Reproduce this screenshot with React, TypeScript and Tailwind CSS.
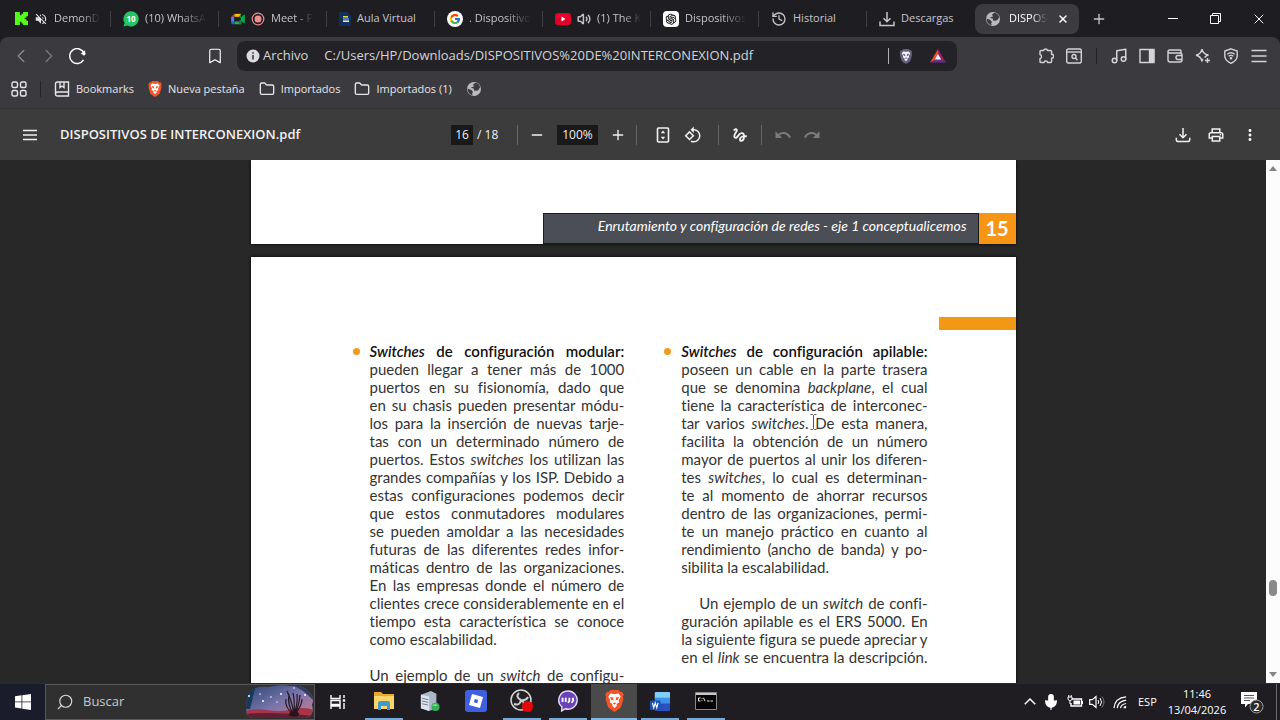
import type { ReactNode } from "react";
import {
  Bookmark, ChevronLeft, ChevronRight, Folder, History, Mic, Minus, Music, Plus, Search, Volume2, X,
} from "lucide-react";
import { FcGoogle } from "react-icons/fc";
import { AiOutlineOpenAI } from "react-icons/ai";
import { MdGesture, MdMoreVert, MdOutlinePrint, MdRedo, MdRotate90DegreesCcw, MdUndo, MdVolumeOff } from "react-icons/md";

const FADE = "[mask-image:linear-gradient(to_right,black_60%,transparent)]";

function Svg({ children, className = "size-4" }: { children: ReactNode; className?: string }) {
  return (
    <svg viewBox="0 0 16 16" className={`shrink-0 ${className}`} fill="none" stroke="currentColor" strokeWidth="1.4">
      {children}
    </svg>
  );
}

function Globe() {
  return (
    <svg viewBox="0 0 16 16" className="size-4 shrink-0">
      <circle cx="8" cy="8" r="7" fill="#b9babd" />
      <path d="M9.5 1.700 7 3.600 8 5.400 4.500 6.800 7.600 7.600 8.300 9.800 12 9.400 14.200 6.300A6.300 6.300 0 0 0 9.500 1.700Z" fill="#3c3c40" />
      <path d="M1.600 7.500 5.400 9.100 7 10.900 6 12.500 6.800 14.400A6.400 6.400 0 0 1 1.600 7.500Z" fill="#3c3c40" />
    </svg>
  );
}

function DownloadTray({ round = false }: { round?: boolean }) {
  return (
    <svg viewBox="0 0 16 16" className="size-4 shrink-0" fill="none" stroke="currentColor" strokeWidth="1.5">
      <path d="M8 1v9.500M4.500 7.200 8 10.700l3.500-3.500" />
      <path d={round ? "M1.300 10.800v2.200q0 1.500 1.500 1.500h10.400q1.500 0 1.500-1.500v-2.200" : "M1 10.500v4h14v-4"} />
    </svg>
  );
}

function BraveLion({ className, shield = "#f1562b", face = "#fff" }: { className: string; shield?: string; face?: string }) {
  return (
    <svg viewBox="0 0 20 24" className={className}>
      <path d="M5.5 0h9l2 2.300 1.800-.3 1.700 3-.8 2.500.6 2-2.600 8.800Q16.500 20 10 24 3.500 20 2.800 18.300L.2 9.500l.6-2L0 5l1.700-3 1.800.3Z" fill={shield} />
      <path d="m10 4.500 4.500-.7 2.300 3.500-2.300 4 .7 2-3 2 .3 2L10 19.500l-2.500-2.200.3-2-3-2 .7-2-2.300-4 2.300-3.500Z" fill={face} />
      <path d="m5 7.500 3.500.8.3 3.200-2.600-1.200ZM15 7.500l-3.500.8-.3 3.200 2.600-1.200ZM8 14.500l2-.9 2 .9-2 1.300Z" fill={shield} />
    </svg>
  );
}

function Kick() {
  return (
    <svg viewBox="0 0 12 12" className="size-[13px] shrink-0">
      <path d="M0 0h4.500v3H6V1.500h1.500V0H12v4h-1.500v1.300H9v1.400h1.500V8H12v4H7.500v-1.500H6V9H4.500v3H0Z" fill="#53fc18" />
    </svg>
  );
}

function WhatsApp() {
  return (
    <span className="relative flex size-4 shrink-0 items-center justify-center text-[#25c466]">
      <svg viewBox="0 0 16 16" className="size-4">
        <path d="M8.200.3a7.600 7.600 0 1 1-3.900 14.200L.5 15.600l1.100-3.700A7.600 7.600 0 0 1 8.200.3Z" fill="currentColor" />
      </svg>
      <b className="absolute text-[8px] leading-4 text-white">10</b>
    </span>
  );
}

function Meet() {
  return (
    <svg viewBox="0 0 16 14" className="h-3 w-[14px] shrink-0">
      <path d="M0 4.500 4 1v3.500Z" fill="#ea4335" />
      <path d="M0 4.500h3.500v6H0Z" fill="#4285f4" />
      <path d="M4 1h7.500v3.500H4Z" fill="#fbbc04" />
      <path d="M0 10h4v3H1.200Q0 13 0 11.800Z" fill="#1967d2" />
      <path d="M4 9.800h5l3-2.500V13H4Z" fill="#34a853" />
      <path d="M11.500 1v12H9V9.500L12 7 9 4.500Z" fill="#188038" />
      <path d="m11.500 5 3.500-3q1-.6 1 .5v9q0 1-1 .5l-3.500-3Z" fill="#00ac47" />
    </svg>
  );
}

function Recording() {
  return (
    <svg viewBox="0 0 14 14" className="size-[14px] shrink-0">
      <circle cx="7" cy="7" r="5.8" fill="none" stroke="#e58a90" strokeWidth="1.2" />
      <circle cx="7" cy="7" r="3.5" fill="#f28b8f" />
    </svg>
  );
}

function AulaLogo() {
  return (
    <svg viewBox="0 0 12 14" className="h-[14px] w-3 shrink-0">
      <path d="M0 0h8l4 4v10H0Z" fill="#12305a" />
      <path d="M4 4h5v1.500H4Z" fill="#f0d843" />
      <path d="M4 6.200h6v1.500H4Z" fill="#4aa3d8" />
      <path d="M4 8.400h6V10H4Z" fill="#e8ecc0" />
    </svg>
  );
}

function YouTube() {
  return (
    <svg viewBox="0 0 16 12" className="h-3 w-4 shrink-0">
      <rect width="16" height="12" rx="3" fill="#e3002b" />
      <path d="m6.5 3.600 4 2.400-4 2.400Z" fill="#fff" />
    </svg>
  );
}

interface Tab {
  title: string;
  icon: ReactNode;
  extra?: ReactNode;
  fade?: boolean;
}

const TABS: Tab[] = [
  { title: "DemonD", icon: <Kick />, extra: <MdVolumeOff className="size-[14px] shrink-0 text-[#e4e4e8]" />, fade: true },
  { title: "(10) WhatsA", icon: <WhatsApp />, fade: true },
  { title: "Meet - P", icon: <Meet />, extra: <Recording />, fade: true },
  { title: "Aula Virtual", icon: <AulaLogo /> },
  {
    title: ". Dispositivo",
    icon: <span className="flex size-4 shrink-0 items-center justify-center rounded-full bg-white"><FcGoogle className="size-3" /></span>,
    fade: true,
  },
  { title: "(1) The K", icon: <YouTube />, extra: <Volume2 className="size-[14px] shrink-0" strokeWidth={2.5} />, fade: true },
  {
    title: "Dispositivos",
    icon: <span className="flex size-4 shrink-0 items-center justify-center rounded bg-white text-black"><AiOutlineOpenAI className="size-[14px]" /></span>,
    fade: true,
  },
  { title: "Historial", icon: <History className="size-4 shrink-0" /> },
  { title: "Descargas", icon: <DownloadTray /> },
];

function TabStrip() {
  return (
    <div className="flex h-[37px] shrink-0 items-center pl-[2px] text-[11px] text-[#c5c5c9]">
      {TABS.map((tab, i) => (
        <button key={tab.title} className="flex h-7 w-[108px] min-w-0 items-center">
          <span className={`h-4 w-px shrink-0 ${i > 0 ? "bg-[#3f3f44]" : ""}`} />
          <span className="ml-3 flex items-center gap-[6px]">
            {tab.icon}
            {tab.extra}
            <span className={`whitespace-nowrap ${tab.fade ? FADE : ""}`}>{tab.title}</span>
          </span>
        </button>
      ))}
      <div className="ml-px flex h-[30px] w-[104px] items-center rounded-lg bg-[#3c3c40] px-[10px] text-white">
        <Globe />
        <button className={`ml-2 whitespace-nowrap ${FADE}`}>DISPOS</button>
        <button aria-label="Cerrar pestaña" className="ml-auto"><X className="size-3" strokeWidth={3} /></button>
      </div>
      <button aria-label="Nueva pestaña" className="ml-3"><Plus className="size-4" strokeWidth={2} /></button>
      <div className="ml-auto flex h-full text-white">
        <button aria-label="Minimizar" className="flex w-[43px] items-center justify-center"><span className="h-px w-[10px] bg-white" /></button>
        <button aria-label="Restaurar" className="flex w-[43px] items-center justify-center">
          <svg viewBox="0 0 11 11" className="size-[11px]" fill="none" stroke="currentColor">
            <path d="M.5 2.500h8v8h-8ZM2.500 2.500v-2h8v8h-2" />
          </svg>
        </button>
        <button aria-label="Cerrar" className="flex w-[43px] items-center justify-center"><X className="size-4" strokeWidth={1.5} /></button>
      </div>
    </div>
  );
}

const TOOLS: { label: string; art: ReactNode }[] = [
  { label: "Música", art: <Music className="size-[18px]" strokeWidth={2} /> },
  { label: "Panel lateral", art: <Svg><path d="M1 1.500h14v13H1Z" /><path d="M10.500 2h4v12h-4Z" fill="currentColor" /></Svg> },
  {
    label: "Cartera",
    art: <Svg><path d="M14 5V3q0-1-1-1H3Q1 2 1 3.500V12q0 2 2 2h10q2 0 2-2V7q0-2-2-2H3Q1 5 1 3.500" /><path d="M15 7.500h-4q-2 0-2 2t2 2h4" /></Svg>,
  },
  {
    label: "Leo",
    art: <Svg><path d="M7 1.200Q8 6.200 13.500 7 11 7.500 9.600 9.500M7 1.200Q6 6.200 1 7.200q5 1 6 6.300.3-1.800 1-2.600" /><path d="M12.5 10v5M10 12.500h5" /></Svg>,
  },
  {
    label: "VPN",
    art: <Svg><path d="M8 .8 14.200 3v5q0 4.500-6.200 7.400Q1.800 12.500 1.800 8V3Z" /><path d="M4.300 6.200q3.700-2.800 7.400 0M5.600 8.300q2.400-1.800 4.800 0" /><circle cx="8" cy="10.2" r=".6" fill="currentColor" /></Svg>,
  },
  { label: "Menú", art: <Svg><path d="M.5 2.500h15M.5 8h15M.5 13.500h15" /></Svg> },
];

function NavRow() {
  return (
    <div className="flex h-[38px] items-center pl-[7px] pr-[7px] text-[#d4d4d8]">
      <button aria-label="Atrás" className="flex w-7 justify-center text-[#8b8b90]"><ChevronLeft className="size-[22px]" strokeWidth={1.5} /></button>
      <button aria-label="Adelante" className="flex w-7 justify-center text-[#77777c]"><ChevronRight className="size-[22px]" strokeWidth={1.5} /></button>
      <button aria-label="Recargar" className="flex w-7 justify-center">
        <Svg className="size-[17px] text-white">
          <path d="M13.7 11.200A7 7 0 1 1 14.200 5" />
          <path d="M10.8 5.600h4.400V2Z" fill="currentColor" stroke="none" />
          <circle cx="14" cy="5.5" r="1.6" fill="currentColor" stroke="none" />
        </Svg>
      </button>
      <button aria-label="Añadir marcador" className="ml-auto flex w-7 justify-center text-white">
        <Bookmark className="size-[18px]" strokeWidth={1.5} />
      </button>
      <div className="ml-2 mr-[75px] flex h-[30px] w-[720px] items-center rounded-lg bg-[#232327] px-2 text-[13px]">
        <Svg>
          <circle cx="8" cy="8" r="6.5" fill="#dcdce0" stroke="none" />
          <path d="M8 7v4.500M8 4.200v1.600" stroke="#232327" />
        </Svg>
        <span className="ml-[2px]">Archivo</span>
        <input
          aria-label="Dirección"
          className="ml-4 min-w-0 flex-1 bg-transparent outline-none"
          defaultValue="C:/Users/HP/Downloads/DISPOSITIVOS%20DE%20INTERCONEXION.pdf"
        />
        <span className="h-4 w-px bg-[#b0b0b4]" />
        <button aria-label="Escudos" className="ml-[10px]"><BraveLion className="h-[15px] w-[14px]" shield="#625f7d" face="#f4f2fa" /></button>
        <button aria-label="Rewards" className="ml-[17px] mr-[3px]">
          <svg viewBox="0 0 18 16" className="h-[14px] w-4">
            <path d="M9 0 0 15.500 9 10.500Z" fill="#ff4724" />
            <path d="M9 0 18 15.500 9 10.500Z" fill="#9e1f63" />
            <path d="M0 15.500h18L9 10Z" fill="#662d91" />
            <path d="m9 5.800 3.600 6.200H5.400Z" fill="#fff" />
          </svg>
        </button>
      </div>
      <button aria-label="Extensiones" className="flex w-7 justify-center">
        <Svg>
          <path d="M3 2.500h2.600a2.100 2.100 0 0 1 4 0h3q1 0 1 1v2.800a2 2 0 0 1 0 4v3.200q0 1-1 1H9.800a2 2 0 0 0-3.900 0H3q-1 0-1-1v-2.800a2.200 2.200 0 0 0 0-4.200V3.500q0-1 1-1Z" />
        </Svg>
      </button>
      <button aria-label="Buscar pestañas" className="flex w-7 justify-center">
        <Svg><rect x=".7" y="1" width="14.6" height="14" rx="1.5" /><path d="M1 4h14" /><circle cx="8" cy="8.5" r="2" /><path d="m9.5 10 2 2.200" /></Svg>
      </button>
      <span className="mx-2 h-4 w-px bg-[#222226]" />
      {TOOLS.map((tool) => (
        <button key={tool.label} aria-label={tool.label} className="flex w-7 justify-center">{tool.art}</button>
      ))}
    </div>
  );
}

const BOOKMARKS: { label: string; icon: ReactNode }[] = [
  {
    label: "Bookmarks",
    icon: <Svg><path d="M1.5 13V3q0-2 2-2h11v14h-11q-2 0-2-2t2-2h11M6 1v5.500l2-1.500 2 1.500V1" /></Svg>,
  },
  { label: "Nueva pestaña", icon: <BraveLion className="h-4 w-[14px]" /> },
  { label: "Importados", icon: <Folder className="size-4" strokeWidth={2} /> },
  { label: "Importados (1)", icon: <Folder className="size-4" strokeWidth={2} /> },
];

function BookmarksRow() {
  return (
    <div className="flex h-[28px] items-center pl-[11px] text-[11px] font-medium text-[#e6e6ea]">
      <button aria-label="Aplicaciones">
        <Svg>
          <rect x="1" y="1" width="5.5" height="5.5" rx="1.5" />
          <rect x="9.5" y="1" width="5.5" height="5.5" rx="1.5" />
          <rect x="1" y="9.5" width="5.5" height="5.5" rx="1.5" />
          <rect x="9.5" y="9.5" width="5.5" height="5.5" rx="1.5" />
        </Svg>
      </button>
      <span className="mx-[13px] h-4 w-px bg-[#242428]" />
      <nav className="flex items-center gap-[14px]">
        {BOOKMARKS.map(({ label, icon }) => (
          <a key={label} href="#" className="flex items-center gap-[6px] whitespace-nowrap">{icon}{label}</a>
        ))}
        <a href="#" aria-label="Sitio"><Globe /></a>
      </nav>
    </div>
  );
}

function Divider() {
  return <span className="h-5 w-px bg-[#66666a]" />;
}

function PdfToolbar() {
  return (
    <div className="grid h-[52px] shrink-0 grid-cols-[1fr_auto_1fr] items-center border-t border-[#353535] bg-[#3c3c3c] text-[12px] font-medium text-[#f1f1f1]">
      <div className="flex items-center gap-[22px] pl-[22px]">
        <button aria-label="Barra lateral">
          <Svg><path d="M1 3.500h14M1 8h14M1 12.500h14" /></Svg>
        </button>
        <h1 className="whitespace-nowrap text-[13px] font-semibold">DISPOSITIVOS DE INTERCONEXION.pdf</h1>
      </div>
      <div className="mr-2 flex items-center">
        <input aria-label="Página" defaultValue="16" className="h-5 w-[22px] bg-[#191919] text-center outline-none" />
        <span className="ml-1 w-10">/ 18</span>
        <Divider />
        <button aria-label="Reducir" className="ml-[11px]"><Minus className="size-4" strokeWidth={2} /></button>
        <input aria-label="Zoom" defaultValue="100%" className="mx-3 h-5 w-[41px] bg-[#191919] text-center outline-none" />
        <button aria-label="Ampliar" className="mr-[10px]"><Plus className="size-4" strokeWidth={2} /></button>
        <Divider />
        <button aria-label="Ajustar a la página" className="ml-[18px]">
          <Svg>
            <rect x="2.5" y="1" width="11" height="14" rx="1" strokeWidth="1.6" />
            <path d="m8 3.500 2.200 2.700H5.800ZM8 12.500l2.200-2.700H5.800Z" fill="currentColor" stroke="none" />
          </Svg>
        </button>
        <button aria-label="Girar" className="ml-[13px] mr-4"><MdRotate90DegreesCcw className="size-[18px]" /></button>
        <Divider />
        <button aria-label="Dibujar" className="mx-3"><MdGesture className="size-[18px]" /></button>
        <Divider />
        <button aria-label="Deshacer" className="ml-3 text-[#7c7c7c]"><MdUndo className="size-[18px]" /></button>
        <button aria-label="Rehacer" className="ml-[11px] text-[#7c7c7c]"><MdRedo className="size-[18px]" /></button>
      </div>
      <div className="flex items-center justify-end gap-4 pr-[21px]">
        <button aria-label="Descargar"><DownloadTray round /></button>
        <button aria-label="Imprimir"><MdOutlinePrint className="size-[18px]" /></button>
        <button aria-label="Más acciones"><MdMoreVert className="size-[18px]" /></button>
      </div>
    </div>
  );
}

const MODULAR: ReactNode[] = [
  "pueden llegar a tener más de 1000",
  "puertos en su fisionomía, dado que",
  "en su chasis pueden presentar módu-",
  "los para la inserción de nuevas tarje-",
  "tas con un determinado número de",
  <>puertos. Estos <i>switches</i> los utilizan las</>,
  "grandes compañías y los ISP. Debido a",
  "estas configuraciones podemos decir",
  "que estos conmutadores modulares",
  "se pueden amoldar a las necesidades",
  "futuras de las diferentes redes infor-",
  "máticas dentro de las organizaciones.",
  "En las empresas donde el número de",
  "clientes crece considerablemente en el",
  "tiempo esta característica se conoce",
];

const APILABLE: ReactNode[] = [
  "poseen un cable en la parte trasera",
  <>que se denomina <i>backplane</i>, el cual</>,
  "tiene la característica de interconec-",
  <>tar varios <i>switches</i>.<TextCursor /> De esta manera,</>,
  "facilita la obtención de un número",
  "mayor de puertos al unir los diferen-",
  <>tes <i>switches</i>, lo cual es determinan-</>,
  "te al momento de ahorrar recursos",
  "dentro de las organizaciones, permi-",
  "te un manejo práctico en cuanto al",
  "rendimiento (ancho de banda) y po-",
];

function TextCursor() {
  return (
    <span className="relative">
      <svg viewBox="0 0 7 16" className="absolute left-[2px] top-0 h-4 w-[7px]" fill="none" stroke="#555">
        <path d="M.5.500h2l1 1 1-1h2M3.500 1.500v13M.5 15.500h2l1-1 1 1h2" />
      </svg>
    </span>
  );
}

// Lines are broken by hand, each one stretched to the column's width.
function Lines({ lines }: { lines: ReactNode[] }) {
  return (
    <>
      {lines.map((line, i) => (
        <span key={i} className="block whitespace-nowrap [text-align-last:justify]">{line}</span>
      ))}
    </>
  );
}

function Column({ heading, children, className }: { heading: string; children: ReactNode; className: string }) {
  return (
    <section className={`flex gap-[10px] ${className}`}>
      <span className="mt-[6px] size-[7px] shrink-0 rounded-full bg-[#f39a1e]" />
      <div className="min-w-0 flex-1">
        <h2 className="whitespace-nowrap font-semibold text-[#111] [text-align-last:justify]">
          <i>Switches</i> {heading}
        </h2>
        {children}
      </div>
    </section>
  );
}

function Viewer() {
  return (
    <main className="flex min-h-0 flex-1 bg-[#282828]">
      <div className="flex min-w-0 flex-1 flex-col items-center gap-[13px] overflow-hidden font-[Lato,sans-serif] [font-variant-ligatures:none]">
        <article className="flex h-[84px] w-[765px] shrink-0 items-end justify-end bg-white shadow-[0_0_3px_black]">
          <div className="flex h-[31px] w-[436px] items-center justify-end border border-[#1c1d1f] bg-[#4b4e54] pb-[6px] pr-[11px] text-[14px] italic text-white">
            Enrutamiento y configuración de redes - eje 1 conceptualicemos
          </div>
          <div className="flex h-[31px] w-[37px] items-center justify-center bg-[#f79514] pb-[2px] text-[20px] font-bold text-white">15</div>
        </article>
        <article className="w-[765px] shrink-0 bg-white pt-[60px] shadow-[0_0_3px_black]">
          <div className="ml-auto h-[13px] w-[77px] bg-[#f39815]" />
          <div className="flex pl-[102px] pr-[88px] pt-3 text-[15px] leading-[18px] text-[#333]">
            <Column heading="de configuración modular:" className="w-[272px]">
              <p><Lines lines={MODULAR} />como escalabilidad.</p>
              <p className="mt-[18px]"><Lines lines={[<>Un ejemplo de un <i>switch</i> de configu-</>]} /></p>
            </Column>
            <Column heading="de configuración apilable:" className="ml-10 flex-1">
              <p><Lines lines={APILABLE} />sibilita la escalabilidad.</p>
              <p className="mt-[18px]">
                <span className="block pl-[18px]"><Lines lines={[<>Un ejemplo de un <i>switch</i> de confi-</>]} /></span>
                <Lines
                  lines={[
                    "guración apilable es el ERS 5000. En",
                    "la siguiente figura se puede apreciar y",
                    <>en el <i>link</i> se encuentra la descripción.</>,
                  ]}
                />
              </p>
            </Column>
          </div>
        </article>
      </div>
      <div className="flex w-[14px] shrink-0 flex-col items-center bg-[#fcfcfc] py-[6px]">
        <svg viewBox="0 0 8 5" className="h-[5px] w-2"><path d="m0 5 4-5 4 5Z" fill="#858585" /></svg>
        <span className="mt-auto h-4 w-2 rounded-full bg-[#8a8a8a]" />
        <svg viewBox="0 0 8 5" className="mt-[76px] h-[5px] w-2"><path d="m0 0 4 5 4-5Z" fill="#858585" /></svg>
      </div>
    </main>
  );
}

function Desert() {
  return (
    <svg viewBox="0 0 68 34" className="h-[34px] w-[68px] shrink-0">
      <defs>
        <linearGradient id="sky" x1="0" y1="0" x2="1" y2="1">
          <stop offset="0" stopColor="#274472" />
          <stop offset=".5" stopColor="#7874aa" />
          <stop offset="1" stopColor="#d07f8f" />
        </linearGradient>
        <clipPath id="cloud"><path d="M5 6Q12 0 22 2 34-1 44 1q14-2 20 7 5 5 2 12 3 10-6 13H6Q-2 30 1 22-1 12 5 6Z" /></clipPath>
      </defs>
      <g clipPath="url(#cloud)">
        <path d="M0 0h68v34H0Z" fill="url(#sky)" />
        <path d="M0 0h10L4 24H0Z" fill="#173a5c" />
        <path d="M45 0h23v16Q56 3 45 0Z" fill="#313b63" />
        <path d="M0 26q10-3 20-1 14 2 24 0 14-4 24 0v9H0Z" fill="#a63549" />
        <path d="M0 29q24-3 68 2v3H0Z" fill="#5f2035" />
        <path d="M48 30Q38 22 40 14M48 30Q41 20 43 9M48 30Q46 16 41 6M48 30Q49 16 47 8M48 30Q52 18 51 9M48 30Q56 21 56 14M48 30Q53 22 54 10" fill="none" stroke="#251723" strokeWidth="1.2" />
        <ellipse cx="48" cy="29" rx="5" ry="2.5" fill="#23141d" />
        <g fill="#fff">
          <circle cx="3" cy="11" r="1" /><circle cx="14" cy="9" r=".8" /><circle cx="17" cy="16" r="1" />
          <circle cx="25" cy="12" r=".8" /><circle cx="35" cy="9" r="1" /><circle cx="48" cy="3" r=".8" />
          <circle cx="59" cy="10" r="1" /><circle cx="31" cy="17" r=".7" />
        </g>
      </g>
    </svg>
  );
}

const APPS: { name: string; state: string; art: ReactNode }[] = [
  {
    name: "Explorador de archivos",
    state: "open",
    art: (
      <svg viewBox="0 0 22 20" className="h-5 w-[22px]">
        <path d="M1 1h7l2 2h11v15H1Z" fill="#e9a92b" />
        <path d="M1 5h20v13H1Z" fill="#ffd567" />
        <path d="M5 19v-7q0-2 2-2h8q2 0 2 2v7h-3v-4H8v4Z" fill="#3d9bd1" />
      </svg>
    ),
  },
  {
    name: "Servidor",
    state: "",
    art: (
      <svg viewBox="0 0 22 24" className="h-[22px] w-5">
        <path d="m1 5 11-4 6 3v16l-8 3-9-3Z" fill="#aab8c8" />
        <path d="m1 5 9 2v16l-9-3Z" fill="#dbe4ee" />
        <path d="m2 9 7 1.500M2 12l7 1.500M2 15l7 1.500" stroke="#65758a" />
        <circle cx="17" cy="18.5" r="4.5" fill="#37b25c" />
        <path d="M13.5 17q3-3 6 0-3 1-6 0Z" fill="#90e09f" />
      </svg>
    ),
  },
  {
    name: "Roblox",
    state: "",
    art: (
      <svg viewBox="0 0 22 22" className="size-[22px]">
        <rect width="22" height="22" rx="3" fill="#3f5fe0" />
        <path d="m7 4 11 3-3 11-11-3Z" fill="#fff" />
        <path d="m9.8 8.900 3.400.9-.9 3.400-3.400-.9Z" fill="#3f5fe0" />
      </svg>
    ),
  },
  {
    name: "OBS Studio",
    state: "open",
    art: (
      <svg viewBox="0 0 24 24" className="size-6">
        <circle cx="11" cy="11" r="10" fill="#242225" stroke="#d6d6d6" strokeWidth="1.5" />
        <path d="M9 4q-4 4 2 7 5 1 7-3M11 11q-1 6-7 4M11 11q5 3 2 8" fill="none" stroke="#cfcfcf" strokeWidth="2" />
        <circle cx="17.5" cy="17.5" r="5.5" fill="#e5080b" />
      </svg>
    ),
  },
  {
    name: "Chat",
    state: "open",
    art: (
      <svg viewBox="0 0 22 24" className="h-[22px] w-5">
        <path d="M11 1a10 10 0 1 1-3 19.500L4 23l.3-4.500A10 10 0 0 1 11 1Z" fill="#6c43b8" stroke="#e8defa" strokeWidth="1.5" />
        <path d="M5 13V8.500M8.500 13V8.500" stroke="#fff" strokeWidth="2" />
        <path d="M12.5 8.500v3.500l-1.500 2M16.500 8.500v3.500l-1.500 2" stroke="#fff" strokeWidth="2" fill="none" />
      </svg>
    ),
  },
  { name: "Brave", state: "active", art: <BraveLion className="h-[22px] w-[19px]" /> },
  {
    name: "Word",
    state: "open",
    art: (
      <svg viewBox="0 0 22 22" className="size-[21px]">
        <path d="M6 1h14q1 0 1 1v6H5V2q0-1 1-1Z" fill="#80cdf7" />
        <path d="M5 7h16v7H5Z" fill="#3f8fe8" />
        <path d="M5 13h16v7q0 1-1 1H6q-1 0-1-1Z" fill="#2a4fc0" />
        <rect y="10" width="11" height="10" rx="1" fill="#1b53b4" />
        <path d="m2.5 12.500 1.400 5 1.600-5 1.600 5 1.400-5" fill="none" stroke="#fff" strokeWidth="1.2" />
      </svg>
    ),
  },
  {
    name: "Símbolo del sistema",
    state: "open",
    art: (
      <svg viewBox="0 0 22 18" className="h-[18px] w-[22px]">
        <path d="M.5.500h21v17H.5Z" fill="#050505" stroke="#8a8a8a" />
        <path d="M1 1h20v2H1Z" fill="#c8c8c8" />
        <path d="M5.5 6H3.500v3h2M7 6v.8M7 8.200V9M8.500 5.800l1.500 3.400M12 9h2.500M15.500 9H18" fill="none" stroke="#eee" />
      </svg>
    ),
  },
];

function Taskbar() {
  return (
    <footer className="flex h-[37px] shrink-0 items-stretch border-t border-[#2a2a2d] bg-[#1f1d21] text-white">
      <button aria-label="Inicio" className="flex w-[45px] items-center justify-center bg-[#1b1c2b]">
        <svg viewBox="0 0 16 16" className="size-4"><path d="M0 2.200 6.500 1.300v6.200H0ZM7.300 1.200 16 0v7.500H7.300ZM0 8.300h6.500v6.200L0 13.600ZM7.300 8.300H16V16l-8.700-1.200Z" fill="#fff" /></svg>
      </button>
      <label className="flex w-[270px] items-center border border-[#58585a] bg-[#303031] pl-[10px] text-[#d8d8d8]">
        <Search className="size-[18px] shrink-0 -scale-x-100" strokeWidth={1.5} />
        <input placeholder="Buscar" aria-label="Buscar" className="ml-[9px] min-w-0 flex-1 bg-transparent text-[13px] outline-none placeholder:text-[#c9c9c9]" />
        <Desert />
      </label>
      <button aria-label="Vista de tareas" className="flex w-[46px] items-center justify-center">
        <Svg><path d="M1 1v3.500h9V1M1 15v-3h9v3M1 6.500h9v4H1ZM14 1v3M14 9v6" /><path d="M12.8 5.300h2.400v2.400h-2.400Z" fill="currentColor" stroke="none" /></Svg>
      </button>
      {APPS.map((app) => (
        <button
          key={app.name}
          aria-label={app.name}
          className={`flex w-[46px] flex-col items-center ${app.state === "active" ? "bg-[#4a4a4b]" : ""}`}
        >
          <span className="flex flex-1 items-center justify-center">{app.art}</span>
          <span className={`h-[2px] ${app.state === "active" ? "w-full bg-[#83b8e4]" : "w-[38px]"} ${app.state === "open" ? "bg-[#76a9d8]" : ""}`} />
        </button>
      ))}
      <div className="ml-auto flex items-center pr-[3px] text-[11px]">
        <button aria-label="Iconos ocultos" className="mr-[6px]">
          <Svg className="size-3"><path d="m1 11 7-7 7 7" strokeWidth="2" /></Svg>
        </button>
        <Mic className="size-[18px]" fill="white" strokeWidth={1.5} />
        <Svg className="ml-[7px] size-4">
          <path d="M5 5h9.500v7H4V9" />
          <path d="M6.5 6.500h6.500v4H6.500ZM14.500 7h1.500v3h-1.500Z" fill="currentColor" stroke="none" />
          <path d="M1 3h4v2.500L3 7 1 5.500ZM1.800 1v2M4.200 1v2M3 7v3" strokeWidth="1" />
        </Svg>
        <Svg className="ml-[6px] size-4">
          <path d="M.7 5.700h2.600L7 2.500v11l-3.700-3.200H.7Z" strokeWidth="1.2" />
          <path d="M9 6q1.500 2 0 4M11 4q3 4 0 8" strokeWidth="1" />
          <path d="M13 2.500q4 5.500 0 11" stroke="#777" strokeWidth="1" />
        </Svg>
        <Svg className="ml-2 size-[15px]">
          <path d="M1 14Q2 3 14 2M4.500 14Q5 7 14 5.500M8 14q.5-4 6-5" strokeWidth="1.2" />
          <path d="M11 14q0-2 3-2.500V14Z" fill="currentColor" stroke="none" />
        </Svg>
        <span className="ml-[10px] w-[18px] whitespace-nowrap">ESP</span>
        <time className="ml-[11px] w-[60px] whitespace-nowrap text-center leading-4">
          <span className="block">11:46</span>
          <span className="block">13/04/2026</span>
        </time>
        <button aria-label="Notificaciones" className="ml-[13px] mr-3">
          <svg viewBox="0 0 24 24" className="size-6">
            <path d="M1 2h16v12H8l-3 3.500V14H1Z" fill="#fff" />
            <path d="M4 5.500h10M4 8h10M4 10.500h6" stroke="#555" />
            <circle cx="16.5" cy="16.5" r="6.5" fill="#2a292c" stroke="#9b9b9b" />
            <text x="16.5" y="20.5" textAnchor="middle" fontSize="11" fontWeight="600" fill="#fff">2</text>
          </svg>
        </button>
        <span className="h-full w-px bg-[#6a6a6d]" />
      </div>
    </footer>
  );
}

export default function App() {
  return (
    <div className="flex h-screen flex-col overflow-hidden bg-[#1e1e22] font-[Open_Sans,sans-serif]">
      <TabStrip />
      <header className="h-[71px] shrink-0 rounded-t-lg bg-[#3b3b3f]">
        <NavRow />
        <BookmarksRow />
      </header>
      <PdfToolbar />
      <Viewer />
      <Taskbar />
    </div>
  );
}
